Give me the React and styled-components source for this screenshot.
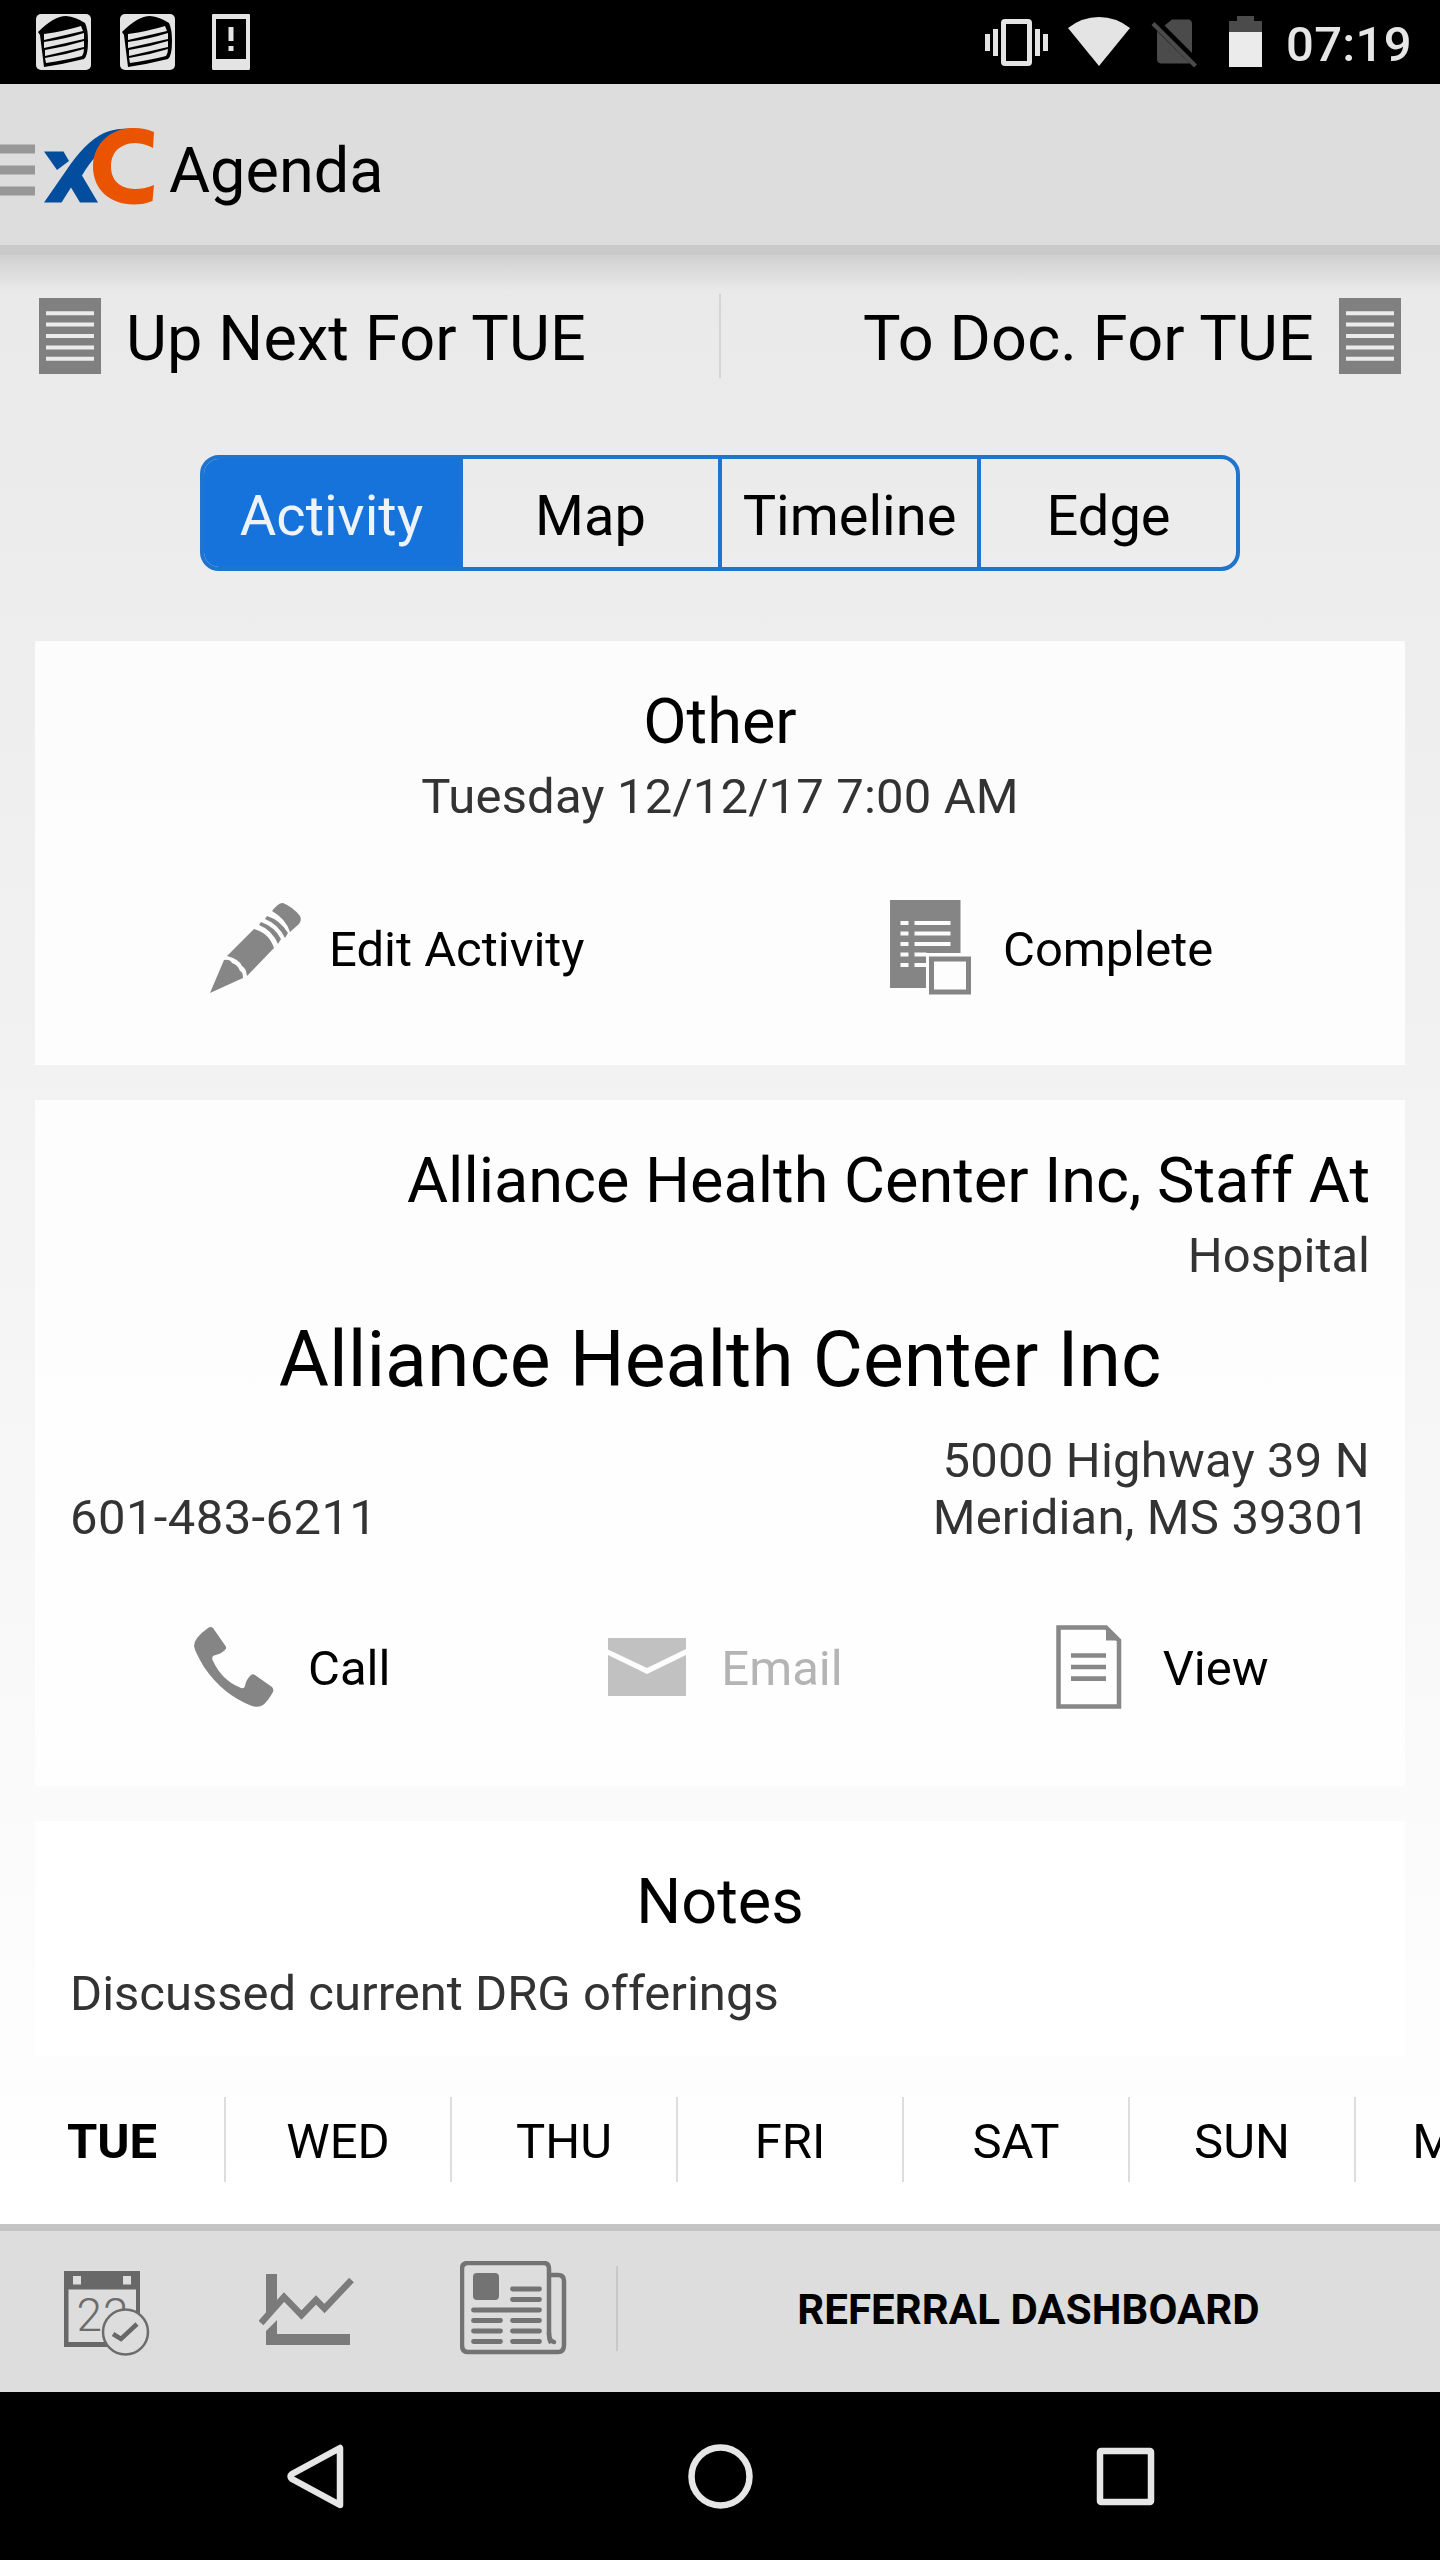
import React from "react";
import styled, { createGlobalStyle } from "styled-components";

const DAYS = ["TUE", "WED", "THU", "FRI", "SAT", "SUN", "MON"];
const TABS = ["Activity", "Map", "Timeline", "Edge"];

function App() {
  return (
    <>
      <GlobalStyle />
      <Screen>
        <StatusBar>
          <StatusIcons />
          <StatusRight />
          <Clock>07:19</Clock>
        </StatusBar>
        <Header>
          <Logo />
          <HeaderTitle>Agenda</HeaderTitle>
        </Header>
        <Content>
          <UpNextRow>
            <UpNextLink>
              <ListIcon />
              <UpNextText>Up Next For TUE</UpNextText>
            </UpNextLink>
            <Divider />
            <UpNextLink $end>
              <UpNextText>To Doc. For TUE</UpNextText>
              <ListIcon />
            </UpNextLink>
          </UpNextRow>

          <Tabs>
            {TABS.map((tab, idx) => (
              <Tab key={tab} $active={idx === 0}>
                {tab}
              </Tab>
            ))}
          </Tabs>

          <ActivityCard>
            <CardTitle>Other</CardTitle>
            <SubText>Tuesday 12/12/17 7:00 AM</SubText>
            <ActivityActions>
              <Action $indent={175} $gap={27}>
                <PencilIcon />
                <ActionText>Edit Activity</ActionText>
              </Action>
              <Action $indent={170} $gap={31}>
                <CompleteIcon />
                <ActionText>Complete</ActionText>
              </Action>
            </ActivityActions>
          </ActivityCard>

          <AccountCard>
            <AccountName>Alliance Health Center Inc, Staff At</AccountName>
            <AccountType>Hospital</AccountType>
            <AccountSite>Alliance Health Center Inc</AccountSite>
            <ContactRow>
              <ContactText $spacing={0.4}>601-483-6211</ContactText>
              <ContactText $end $spacing={0.18}>
                5000 Highway 39 N
                <br />
                Meridian, MS 39301
              </ContactText>
            </ContactRow>
            <AccountActions>
              <Action $indent={124} $gap={34}>
                <PhoneIcon />
                <ActionText>Call</ActionText>
              </Action>
              <Action $indent={105} $gap={35}>
                <MailIcon />
                <ActionText $disabled>Email</ActionText>
              </Action>
              <Action $indent={119} $gap={41}>
                <PageIcon />
                <ActionText>View</ActionText>
              </Action>
            </AccountActions>
          </AccountCard>

          <NotesCard>
            <CardTitle>Notes</CardTitle>
            <NoteText>Discussed current DRG offerings</NoteText>
          </NotesCard>

          <DayStrip>
            {DAYS.map((day, idx) => (
              <Day key={day} $active={idx === 0}>
                {day}
              </Day>
            ))}
          </DayStrip>
        </Content>

        <Footer>
          <FooterIcons>
            <CalendarIcon />
            <ChartIcon />
            <NewsIcon />
          </FooterIcons>
          <FooterDivider />
          <FooterTitle>REFERRAL DASHBOARD</FooterTitle>
        </Footer>
        <NavBar>
          <NavIcons />
        </NavBar>
      </Screen>
    </>
  );
}

export default App;

/* ---------- icons ---------- */

function Cake({ x }) {
  return (
    <g transform={`translate(${x} 0)`}>
      <rect x="0" y="0" width="55" height="56" rx="5" fill="#e4e4e4" />
      <path
        d="M2 18 Q18 2 30 2 Q40 3 49 9 Q52 15 52 27 Q52 42 48 45 Q28 50 8 53 L4 21 Z"
        fill="#000"
      />
      <path d="M8 20 Q29 17 45 12 L47 17 L8 26 Z" fill="#e4e4e4" />
      <path d="M8 28 Q29 25 48 19 L48 25 L8 34 Z" fill="#e4e4e4" />
      <path d="M9 36 Q29 33 48 27 L48 33 L9 42 Z" fill="#e4e4e4" />
      <path d="M9 44 Q29 41 48 35 Q48 39 46 42 Q30 46 10 49 Z" fill="#e4e4e4" />
    </g>
  );
}

function StatusIcons() {
  return (
    <svg width="216" height="56" viewBox="0 0 216 56">
      <Cake x={0} />
      <Cake x={84} />
      <path
        d="M177 0H213Q214 0 214 1V54Q214 56 213 56H177Q176 56 176 54V1Q176 0 177 0ZM180 5V45H210V5Z"
        fill="#e4e4e4"
        fillRule="evenodd"
      />
      <path d="M192.500 13h5v14h-5zM192.500 32h5v5h-5z" fill="#e4e4e4" />
    </svg>
  );
}

function StatusRight() {
  return (
    <RightIcons width="278" height="56" viewBox="985 14 278 56">
      <g fill="#e4e4e4">
        <rect x="985" y="34" width="5" height="17" />
        <rect x="993" y="29" width="5" height="27" />
        <rect x="1035" y="29" width="5" height="27" />
        <rect x="1043" y="34" width="5" height="17" />
        <path
          d="M1005 19H1028Q1032 19 1032 23V62Q1032 66 1028 66H1005Q1001 66 1001 62V23Q1001 19 1005 19ZM1006 24V61H1027V24Z"
          fillRule="evenodd"
        />
        <path d="M1068 28Q1082 17 1099 17Q1116 17 1130 28L1099 66Z" />
      </g>
      <g fill="#4b4b4b">
        <path d="M1172 19.500H1188Q1192 19.500 1192 24V53L1164.500 25.500Z" />
        <path d="M1157 31L1190 63.500H1161Q1157 63 1157 59Z" />
        <path d="M1151.500 25L1154.500 22L1197 64.500L1194 67.500Z" />
        <path d="M1237 16h17v5h8v12h-33V21h8z" />
      </g>
      <rect x="1229" y="32" width="33" height="35" fill="#ebebeb" />
    </RightIcons>
  );
}

function Logo() {
  return (
    <svg width="156" height="81" viewBox="0 124.500 156 81">
      <path d="M0 145h35v9H0zM0 166h35v9H0zM0 187h35v9H0z" fill="#979797" />
      <path d="M44 152H63.500L69 161.500L57 170.500Z" fill="#024d9d" />
      <path
        d="M44 203Q60 180 71 164Q90 138 108 132Q116 129 130 129L112 145Q96 152 82 176L98 203H80L71 188L61.500 203Z"
        fill="#024d9d"
      />
      <path
        d="M154 132.500Q144 128 132 128.500C110 129 93 145 93 167C93 190 110 205 134 205Q144 205 152.500 201.500L154 185.500Q145 189.500 135 189.500C120 189 111 181 111 167C111 152 121 144 135 143.500Q145 144 153 148.500Z"
        fill="#ea5400"
      />
    </svg>
  );
}

function ListIcon() {
  return (
    <svg width="62" height="76" viewBox="0 0 62 76">
      <rect width="62" height="76" fill="#808080" />
      <path
        d="M7 15.300h48M7 26.600h48M7 38h48M7 49.400h48M7 60.700h48"
        stroke="#ebebeb"
        strokeWidth="4"
      />
    </svg>
  );
}

function PencilIcon() {
  return (
    <svg width="92" height="92" viewBox="0 0 92 92" fill="#868686">
      <path d="M62 9Q69 0 73 1Q83 5 90 14Q92 18 89 22L80 30Q76 17 62 9Z" />
      <path d="M57 14Q70 18 78 31L75 36Q68 22 55 17Z" />
      <path d="M51 20Q65 25 71 37L68 42Q62 28 49 23Z" />
      <path d="M17 54L44 27Q59 31 64 46L37 74Q36 66 32 64Q29 57 17 54Z" />
      <path d="M14 58Q20 57 22 61Q28 63 30 69Q33 70 33 76L0 91Z" />
    </svg>
  );
}

function CompleteIcon() {
  return (
    <svg width="82" height="96" viewBox="0 0 82 96">
      <path d="M0 0h70.500v53H36v35H0z" fill="#858585" />
      <path
        d="M10.500 23h8M24.500 23h36M10.500 33.500h8M24.500 33.500h36M10.500 44h8M24.500 44h36M10.500 54.500h8M24.500 54.500h12M10.500 65h8M24.500 65h12"
        stroke="#fcfcfc"
        strokeWidth="4"
      />
      <rect x="41.500" y="59" width="37" height="33" fill="none" stroke="#858585" strokeWidth="5" />
    </svg>
  );
}

function PhoneIcon() {
  return (
    <svg width="80" height="80" viewBox="0 0 80 80">
      <path
        d="M14 1Q17 -1 19 1L31.500 19Q33 21 31 23Q27 27 20 28.500Q17 30 19 34Q28 53 45 60Q50 63 51 59Q52 53 56 49Q58 46 61 48L78 60Q80 62 79 65Q74 74 69 78Q65 81 58 79Q29 68 10 40Q1 25 0 19Q0 11 14 1Z"
        fill="#858585"
      />
    </svg>
  );
}

function MailIcon() {
  return (
    <svg width="78" height="58" viewBox="0 0 78 58" fill="#c1c1c1">
      <path d="M0 0h78v11L39 30L0 11.500z" />
      <path d="M0 17L39 36L78 17V58H0z" />
    </svg>
  );
}

function PageIcon() {
  return (
    <svg width="66" height="84" viewBox="0 0 66 84">
      <path d="M2.500 2.500H50L63 15.500V81.500H2.500Z" fill="none" stroke="#888" strokeWidth="4.500" />
      <path d="M50 1L65 15.500H50Z" fill="#888" />
      <path d="M15 30.500h35M15 42h35M15 53.700h35" stroke="#888" strokeWidth="4.700" />
    </svg>
  );
}

function CalendarIcon() {
  return (
    <svg width="86" height="86" viewBox="0 0 86 86">
      <path
        d="M0 0H76V76H0ZM4.500 18.500V71H72V18.500ZM9 5V13.500H17V5ZM59 5V13.500H67V5Z"
        fill="#686868"
        fillRule="evenodd"
      />
      <CalendarText x="12.500" y="59.500">
        22
      </CalendarText>
      <ellipse cx="61.500" cy="61" rx="22.500" ry="22.500" fill="#ddd" stroke="#6c6c6c" strokeWidth="2.500" />
      <path d="M49 63L57 68L73 53" fill="none" stroke="#686868" strokeWidth="4.500" />
    </svg>
  );
}

function ChartIcon() {
  return (
    <svg width="96" height="72" viewBox="0 0 96 72">
      <path d="M7 0H18V27L7 42ZM18 46V60H91V71H7V57Z" fill="#7b7b7b" />
      <path d="M2 49L25 23L42.500 41L57 26L65.500 34.500L92.500 6" fill="none" stroke="#7b7b7b" strokeWidth="6.500" />
    </svg>
  );
}

function NewsIcon() {
  return (
    <svg width="108" height="94" viewBox="0 0 108 94">
      <path
        d="M91 82Q89 79 89 74V8Q89 2 84 2H8Q2 2 2 8V84Q2 91 8 91H98Q104 91 104 84V20Q104 14 98 14H91"
        fill="none"
        stroke="#737373"
        strokeWidth="4.500"
      />
      <path d="M89 72Q89 80 94 81" fill="none" stroke="#737373" strokeWidth="4.500" strokeLinecap="round" />
      <rect x="13" y="12" width="26" height="27" rx="4" fill="#737373" />
      <path
        d="M52.500 28h27M52.500 38.500h27M13.500 49h66M13.500 59.500h27M52.500 59.500h27M13.500 70h27M52.500 70h27M13.500 80.500h27M52.500 80.500h27"
        stroke="#737373"
        strokeWidth="4.800"
        strokeLinecap="round"
      />
    </svg>
  );
}

function NavIcons() {
  return (
    <svg width="870" height="66" viewBox="285 2443 870 66" fill="none" stroke="#e6e6e6" strokeWidth="6.500">
      <path d="M340 2448V2505L292 2479Q289 2476.500 292 2474Z" strokeLinejoin="round" />
      <circle cx="720.500" cy="2476.500" r="29" />
      <rect x="1100" y="2451" width="51" height="51" rx="1" />
    </svg>
  );
}

/* ---------- styles ---------- */

const GlobalStyle = createGlobalStyle`
  body {
    margin: 0;
    background: #000;
  }
  * {
    box-sizing: border-box;
  }
  svg {
    display: block;
    flex-shrink: 0;
  }
`;

const Screen = styled.div`
  display: flex;
  flex-direction: column;
  width: 1440px;
  height: 2560px;
  overflow: hidden;
  font-family: Roboto, "Liberation Sans", sans-serif;
  color: #000;
`;

const StatusBar = styled.div`
  display: flex;
  align-items: center;
  height: 84px;
  padding: 0 29px 0 36px;
  background: #000;
`;

const RightIcons = styled.svg`
  margin-left: auto;
`;

const Clock = styled.div`
  width: 125px;
  margin-left: 23px;
  padding-top: 5px;
  color: #e6e6e6;
  font-size: 49px;
  font-weight: 500;
  letter-spacing: 0.3px;
  line-height: 60px;
  white-space: nowrap;
`;

const Header = styled.header`
  display: flex;
  align-items: center;
  height: 171px;
  background: #ddd;
  border-bottom: 10px solid #c9c9c9;
`;

const HeaderTitle = styled.h1`
  margin: 0 0 0 13px;
  padding-top: 12px;
  font-size: 63px;
  font-weight: 400;
  line-height: 76px;
`;

const Content = styled.main`
  display: flex;
  flex-direction: column;
  height: 1969px;
  background:
    linear-gradient(rgba(0, 0, 0, 0.11), rgba(0, 0, 0, 0)) 0 0 / 100% 36px no-repeat,
    linear-gradient(#e9e9e9, #fff);
`;

const UpNextRow = styled.div`
  display: flex;
  align-items: center;
  height: 162px;
  padding: 0 39px;
`;

const UpNextLink = styled.div`
  display: flex;
  flex: 1;
  align-items: center;
  justify-content: ${({ $end }) => ($end ? "flex-end" : "flex-start")};
  gap: 25px;
`;

const UpNextText = styled.span`
  padding-top: 6px;
  font-size: 63px;
  letter-spacing: 0.15px;
  line-height: 76px;
  white-space: nowrap;
`;

const Divider = styled.div`
  width: 2px;
  height: 84px;
  background: #d4d4d4;
`;

const Tabs = styled.div`
  display: grid;
  grid-template-columns: 255px repeat(3, 259px);
  width: 1040px;
  height: 116px;
  margin: 38px auto 0;
  overflow: hidden;
  border: 4px solid #1f74ce;
  border-radius: 19px;
`;

const Tab = styled.div`
  font-size: 56px;
  line-height: 114px;
  text-align: center;
  color: ${({ $active }) => ($active ? "#eef3fa" : "#000")};
  background: ${({ $active }) => ($active ? "#1673db" : "transparent")};

  & + & {
    border-left: 4px solid #1f74ce;
  }
`;

const Card = styled.section`
  display: flex;
  flex-direction: column;
  margin: 0 35px;
  background: rgba(255, 255, 255, 0.82);
`;

const ActivityCard = styled(Card)`
  height: 424px;
  margin-top: 70px;
  padding-top: 43px;
`;

const AccountCard = styled(Card)`
  height: 686px;
  margin-top: 35px;
  padding: 43px 35px 0;
`;

const NotesCard = styled(Card)`
  height: 235px;
  margin-top: 35px;
  padding: 43px 35px 0;
`;

const CardTitle = styled.h2`
  margin: 0;
  font-size: 63px;
  font-weight: 400;
  line-height: 76px;
  text-align: center;
`;

const SubText = styled.p`
  margin: 8px 0 0;
  font-size: 49px;
  letter-spacing: 0.16px;
  line-height: 58px;
  text-align: center;
  color: #333;
`;

const ActivityActions = styled.div`
  display: grid;
  grid-template-columns: 1fr 1fr;
  align-items: center;
  height: 96px;
  margin-top: 74px;

  svg {
    margin-bottom: 3px;
  }
`;

const AccountActions = styled.div`
  display: grid;
  grid-template-columns: repeat(3, 1fr);
  align-items: center;
  height: 96px;
  margin-top: 75px;

  svg {
    margin-bottom: 4px;
  }
`;

const Action = styled.div`
  display: flex;
  align-items: center;
  padding-left: ${({ $indent }) => $indent}px;
  gap: ${({ $gap }) => $gap}px;
`;

const ActionText = styled.span`
  font-size: 49px;
  line-height: 58px;
  white-space: nowrap;
  color: ${({ $disabled }) => ($disabled ? "#b4b4b4" : "#000")};
`;

const AccountName = styled.h2`
  margin: 0;
  font-size: 63px;
  font-weight: 400;
  line-height: 76px;
  text-align: right;
  white-space: nowrap;
`;

const AccountType = styled.p`
  margin: 8px 0 0;
  font-size: 49px;
  line-height: 58px;
  text-align: right;
  color: #333;
`;

const AccountSite = styled.h1`
  margin: 28px 0 0;
  font-size: 77px;
  font-weight: 400;
  line-height: 94px;
  text-align: center;
`;

const ContactRow = styled.div`
  display: flex;
  align-items: flex-end;
  justify-content: space-between;
  margin-top: 25px;
`;

const ContactText = styled.div`
  font-size: 49px;
  letter-spacing: ${({ $spacing }) => $spacing}px;
  line-height: 57px;
  color: #333;
  text-align: ${({ $end }) => ($end ? "right" : "left")};
`;

const NoteText = styled.p`
  margin: 25px 0 0;
  font-size: 49px;
  line-height: 58px;
  color: #333;
`;

const DayStrip = styled.div`
  display: flex;
  height: 168px;
  padding-top: 41px;
  overflow: hidden;
`;

const Day = styled.div`
  flex: 0 0 226px;
  height: 85px;
  border-right: 2px solid #ddd;
  font-size: 49px;
  font-weight: ${({ $active }) => ($active ? 700 : 400)};
  line-height: 90px;
  text-align: center;
`;

const Footer = styled.footer`
  display: flex;
  align-items: center;
  height: 168px;
  background: #ddd;
  border-top: 7px solid #c4c4c4;
`;

const FooterIcons = styled.div`
  display: flex;
  align-self: flex-start;
  width: 568px;
  padding: 30px 0 0 64px;

  svg:nth-child(1) {
    margin: 10px 109px 0 0;
  }
  svg:nth-child(2) {
    margin: 13px 105px 0 0;
  }
`;

const FooterDivider = styled.div`
  width: 2px;
  height: 85px;
  margin: 0 0 6px 48px;
  background: #c8c8c8;
`;

const FooterTitle = styled.div`
  flex: 1;
  padding: 0 1px 3px 0;
  font-size: 42px;
  font-weight: 700;
  letter-spacing: 0.1px;
  line-height: 50px;
  text-align: center;
`;

const NavBar = styled.nav`
  display: flex;
  align-items: center;
  justify-content: center;
  height: 168px;
  background: #000;
`;

const CalendarText = styled.text`
  font-family: Roboto, sans-serif;
  font-size: 46px;
  font-weight: 300;
  letter-spacing: 1px;
  fill: #6c6c6c;
`;
